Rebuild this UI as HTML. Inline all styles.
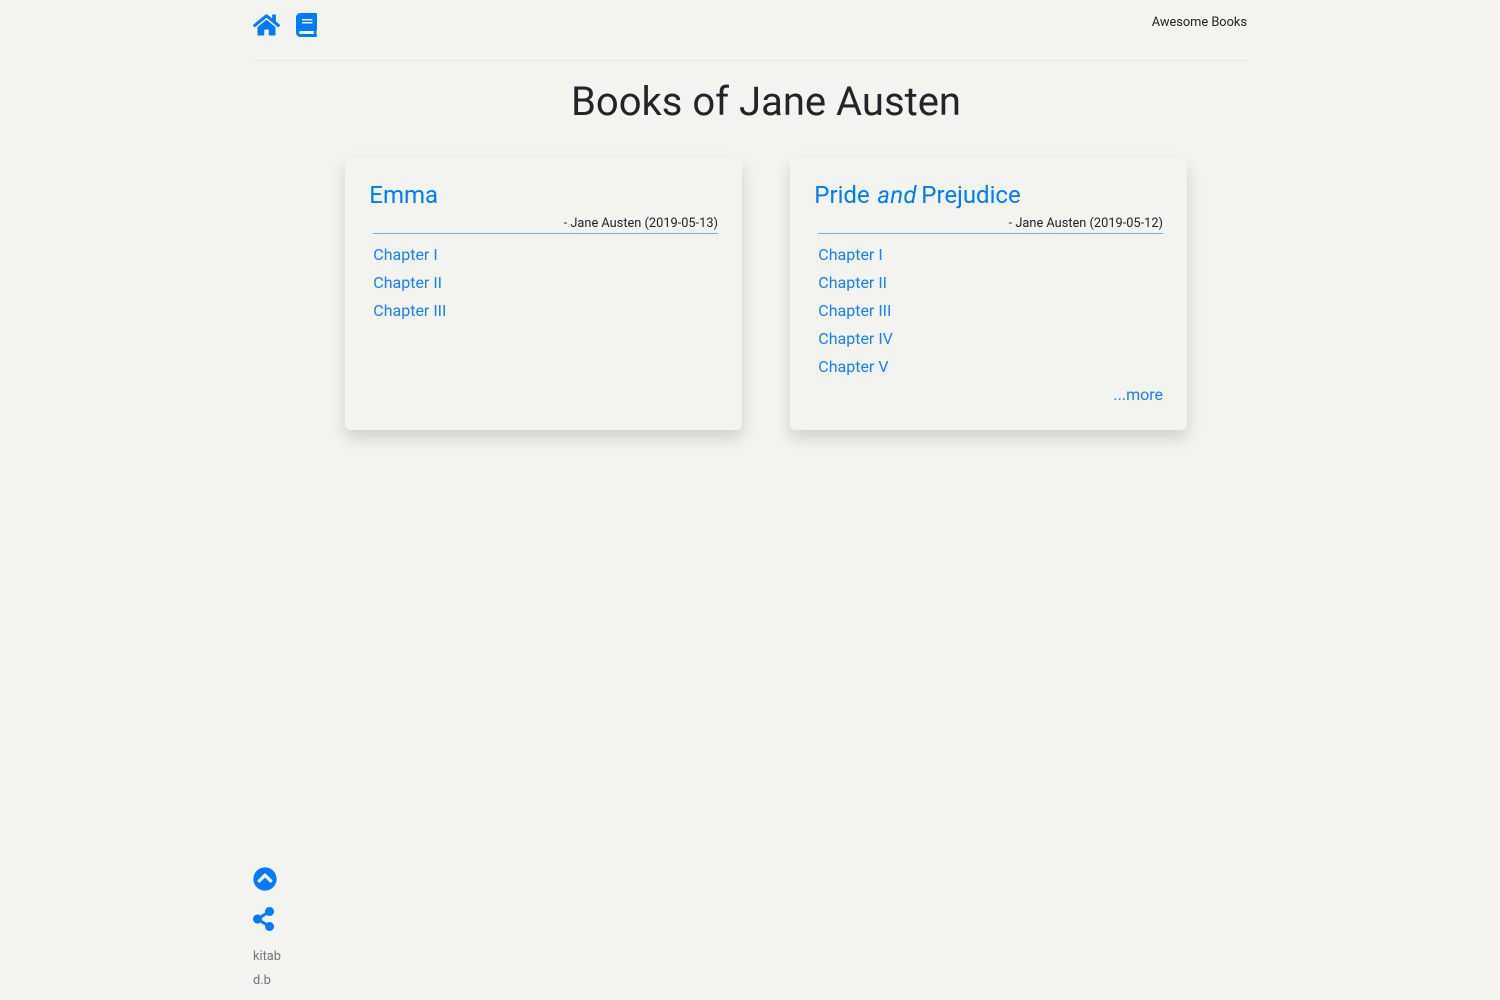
<!DOCTYPE html>
<html lang="en">
<head>
<meta charset="utf-8">
<title>Books of Jane Austen</title>
<style>
html,body{margin:0;padding:0;width:1500px;height:1000px;overflow:hidden;background:#f3f3ef;font-family:"Roboto","Liberation Sans",sans-serif;}
.a{position:absolute;white-space:nowrap;}
a{color:#007bff;text-decoration:none;}
svg{position:absolute;fill:#007bff;display:block;}
.card{position:absolute;top:157px;width:397px;height:273px;background:#f3f3ef;border-radius:5px;box-shadow:0 8px 16px rgba(0,0,0,.15);}
.title{font-size:24px;line-height:28px;top:181px;color:#007bff;}
.by{font-size:12.8px;line-height:16px;top:215px;color:#212529;text-align:right;width:345px;}
.rule{position:absolute;top:233px;width:345px;height:1px;background:#6aaeff;}
.ch{font-size:16px;line-height:20px;color:#1a7fff;}
</style>
</head>
<body>
<svg style="left:253px;top:13px" width="27" height="24" viewBox="0 0 576 512"><path d="M280.37 148.26L96 300.11V464a16 16 0 0 0 16 16l112.06-.29a16 16 0 0 0 15.92-16V368a16 16 0 0 1 16-16h64a16 16 0 0 1 16 16v95.64a16 16 0 0 0 16 16.05L464 480a16 16 0 0 0 16-16V300L295.67 148.26a12.19 12.19 0 0 0-15.3 0zM571.6 251.47L488 182.56V44.05a12 12 0 0 0-12-12h-56a12 12 0 0 0-12 12v72.61L318.47 43a48 48 0 0 0-61 0L4.34 251.47a12 12 0 0 0-1.6 16.9l25.5 31A12 12 0 0 0 45.15 301l235.22-193.74a12.19 12.19 0 0 1 15.3 0L530.9 301a12 12 0 0 0 16.9-1.6l25.5-31a12 12 0 0 0-1.7-16.93z"/></svg>
<svg style="left:296px;top:13px" width="21" height="24" viewBox="0 0 448 512"><path d="M448 360V24c0-13.3-10.7-24-24-24H96C43 0 0 43 0 96v320c0 53 43 96 96 96h328c13.3 0 24-10.7 24-24v-16c0-7.5-3.5-14.3-8.9-18.7-4.2-15.4-4.2-59.3 0-74.7 5.4-4.3 8.9-11.1 8.9-18.6zM128 134c0-3.3 2.7-6 6-6h212c3.3 0 6 2.7 6 6v20c0 3.3-2.7 6-6 6H134c-3.3 0-6-2.7-6-6v-20zm0 64c0-3.3 2.7-6 6-6h212c3.3 0 6 2.7 6 6v20c0 3.3-2.7 6-6 6H134c-3.3 0-6-2.7-6-6v-20zm253.4 250H96c-17.7 0-32-14.3-32-32 0-17.6 14.4-32 32-32h285.4c-1.9 17.1-1.9 46.9 0 64z"/></svg>
<div class="a" style="right:253px;top:15px;font-size:12.8px;line-height:16px;color:#212529">Awesome Books</div>
<div style="position:absolute;left:252px;top:60px;width:996px;height:1px;background:#e7e7e3"></div>
<div class="a" style="left:252px;width:1028px;text-align:center;top:77.6px;font-size:40px;line-height:48px;color:#212529">Books of Jane Austen</div>

<div class="card" style="left:345px"></div>
<div class="a title" style="left:369.3px">Emma</div>
<div class="a by" style="left:373px;top:215.5px">- Jane Austen (2019-05-13)</div>
<div class="rule" style="left:373px"></div>
<div class="a ch" style="left:373.3px;top:244.6px">Chapter I</div>
<div class="a ch" style="left:373.3px;top:272.6px">Chapter II</div>
<div class="a ch" style="left:373.3px;top:300.6px">Chapter III</div>

<div class="card" style="left:790px"></div>
<div class="a title" style="left:814.3px">Pride</div>
<div class="a title" style="left:877.3px;letter-spacing:.3px"><i>and</i></div>
<div class="a title" style="left:921.3px">Prejudice</div>
<div class="a by" style="left:818px;top:215.5px">- Jane Austen (2019-05-12)</div>
<div class="rule" style="left:818px"></div>
<div class="a ch" style="left:818.3px;top:244.6px">Chapter I</div>
<div class="a ch" style="left:818.3px;top:272.6px">Chapter II</div>
<div class="a ch" style="left:818.3px;top:300.6px">Chapter III</div>
<div class="a ch" style="left:818.3px;top:328.6px">Chapter IV</div>
<div class="a ch" style="left:818.3px;top:356.6px">Chapter V</div>
<div class="a ch" style="right:337px;top:385px">...more</div>

<svg style="left:253px;top:867px" width="24" height="24" viewBox="0 0 512 512"><path d="M8 256C8 119 119 8 256 8s248 111 248 248-111 248-248 248S8 393 8 256zm231-113.9L103.5 277.6c-9.4 9.4-9.4 24.6 0 33.9l17 17c9.4 9.4 24.6 9.4 33.9 0L256 226.9l101.6 101.6c9.4 9.4 24.6 9.4 33.9 0l17-17c9.4-9.4 9.4-24.6 0-33.9L273 142.1c-9.4-9.4-24.6-9.4-34 0z"/></svg>
<svg style="left:253px;top:907px" width="21" height="24" viewBox="0 0 448 512"><path d="M352 320c-22.608 0-43.387 7.819-59.79 20.895l-102.486-64.054a96.551 96.551 0 0 0 0-41.683l102.486-64.054C308.613 184.181 329.392 192 352 192c53.019 0 96-42.981 96-96S405.019 0 352 0s-96 42.981-96 96c0 7.158.79 14.13 2.276 20.841L155.79 180.895C139.387 167.819 118.608 160 96 160c-53.019 0-96 42.981-96 96s42.981 96 96 96c22.608 0 43.387-7.819 59.79-20.895l102.486 64.054A96.301 96.301 0 0 0 256 416c0 53.019 42.981 96 96 96s96-42.981 96-96-42.981-96-96-96z"/></svg>
<div class="a" style="left:253px;top:948.5px;font-size:12.8px;line-height:16px;color:#6c757d">kitab</div>
<div class="a" style="left:253px;top:972.5px;font-size:12.8px;line-height:16px;color:#6c757d">d.b</div>
</body>
</html>
